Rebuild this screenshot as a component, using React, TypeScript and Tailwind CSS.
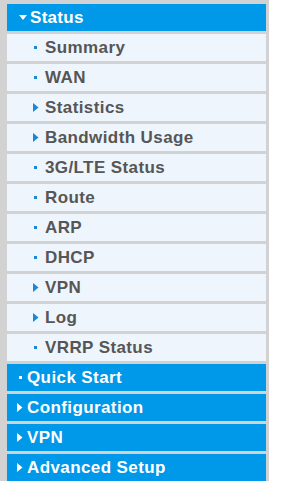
import React from "react";

type Sub = { label: string; kind: "dot" | "arrow" };

const subs: Sub[] = [
  { label: "Summary", kind: "dot" },
  { label: "WAN", kind: "dot" },
  { label: "Statistics", kind: "arrow" },
  { label: "Bandwidth Usage", kind: "arrow" },
  { label: "3G/LTE Status", kind: "dot" },
  { label: "Route", kind: "dot" },
  { label: "ARP", kind: "dot" },
  { label: "DHCP", kind: "dot" },
  { label: "VPN", kind: "arrow" },
  { label: "Log", kind: "arrow" },
  { label: "VRRP Status", kind: "dot" },
];

const tops: Sub[] = [
  { label: "Quick Start", kind: "dot" },
  { label: "Configuration", kind: "arrow" },
  { label: "VPN", kind: "arrow" },
  { label: "Advanced Setup", kind: "arrow" },
];

function Arrow({ color }: { color: string }) {
  return (
    <svg width="6" height="9" viewBox="0 0 6 9" className="shrink-0">
      <path d="M0 0 L5.5 4.5 L0 9 Z" fill={color} />
    </svg>
  );
}

function Dot({ color }: { color: string }) {
  return <span className="inline-block w-[3px] h-[3px] shrink-0" style={{ background: color }} />;
}

export default function App() {
  return (
    <div className="w-[289px] h-[481px] bg-white overflow-hidden" style={{ fontFamily: '"Liberation Sans", Arial, sans-serif' }}>
      <div className="w-[269px] h-full bg-[#d2d2d2] pl-[7px] pr-[3px] pt-[4px] flex flex-col gap-[3px]">
        <div className="h-[27px] shrink-0 bg-[#0098e8] flex items-center pl-[12px] text-white font-bold text-[17px] tracking-[0.3px]">
          <svg width="8" height="6" viewBox="0 0 8 6" className="shrink-0 mr-[3px]">
            <path d="M0 0 L8 0 L4 5 Z" fill="#ffffff" />
          </svg>
          <span>Status</span>
        </div>
        {subs.map((s) => (
          <div key={s.label} className="h-[27px] shrink-0 bg-[#eef5fd] flex items-center text-[#565656] font-bold text-[17px] tracking-[0.4px]">
            {s.kind === "dot" ? (
              <span className="w-[38px] flex justify-start pl-[27px] shrink-0">
                <Dot color="#1a86d6" />
              </span>
            ) : (
              <span className="w-[38px] flex justify-start pl-[26px] shrink-0">
                <Arrow color="#1a86d6" />
              </span>
            )}
            <span>{s.label}</span>
          </div>
        ))}
        {tops.map((s) => (
          <div key={s.label} className="h-[27px] shrink-0 bg-[#0098e8] flex items-center text-white font-bold text-[17px] tracking-[0.4px]">
            {s.kind === "dot" ? (
              <span className="w-[20px] flex justify-start pl-[12px] shrink-0">
                <Dot color="#ffffff" />
              </span>
            ) : (
              <span className="w-[20px] flex justify-start pl-[10px] shrink-0">
                <Arrow color="#ffffff" />
              </span>
            )}
            <span>{s.label}</span>
          </div>
        ))}
      </div>
    </div>
  );
}
